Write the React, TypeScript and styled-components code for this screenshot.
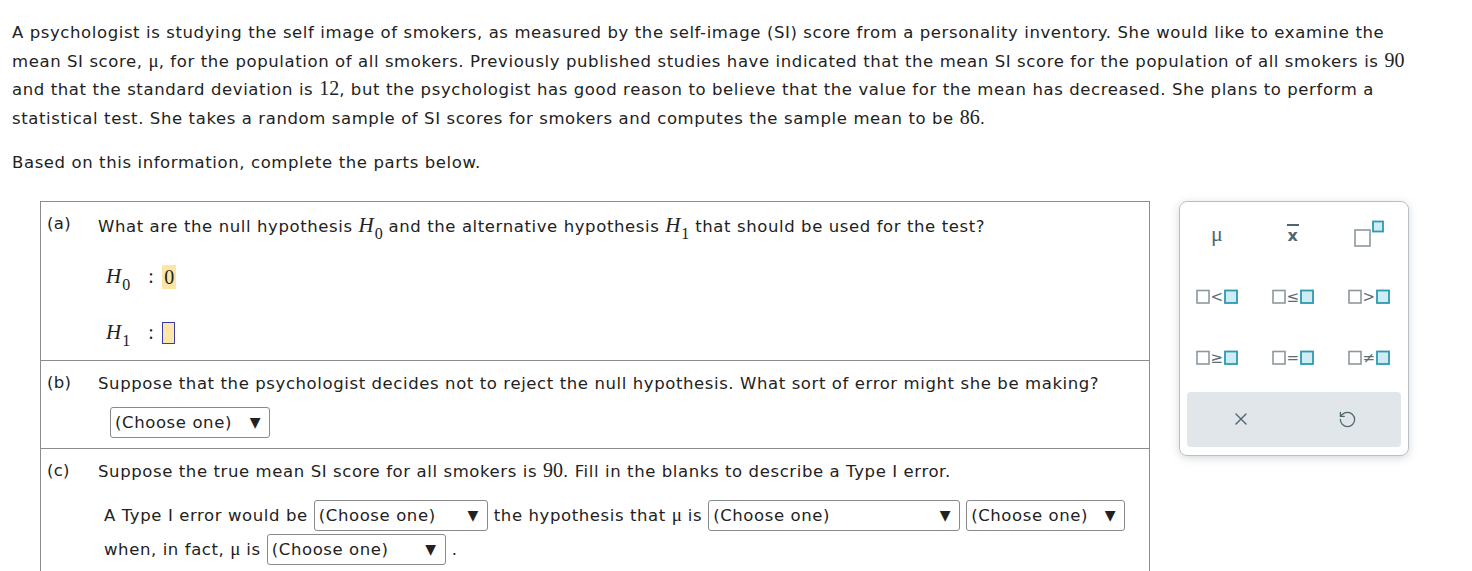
import styled, { createGlobalStyle } from "styled-components";
import { X, RotateCcw } from "lucide-react";

const GlobalStyle = createGlobalStyle`
  body {
    margin: 0;
    background: #fff;
    color: #222;
    font-family: "DejaVu Sans", Verdana, sans-serif;
  }
`;

const Page = styled.div`
  padding: 19px 12px 0 12px;
  width: 1472px;
  box-sizing: border-box;
  height: 571px;
  overflow: hidden;
  font-size: 16.5px;
  letter-spacing: 0.6px;
`;

const Intro = styled.p`
  margin: 0;
  line-height: 28.7px;
  white-space: nowrap;
`;

const Lead = styled.p`
  margin: 17px 0 0 0;
  line-height: 24px;
`;

const Num = styled.span`
  font-family: "Liberation Serif", "Times New Roman", serif;
  font-size: 20px;
  letter-spacing: 0;
  line-height: 0;
`;

const Mu = styled.span`
  font-family: "Liberation Serif", "Times New Roman", serif;
  font-size: 19px;
  letter-spacing: 0;
  line-height: 0;
`;

const Body = styled.div`
  display: flex;
  align-items: flex-start;
  margin-top: 26px;
  margin-left: 28px;
  gap: 29px;
`;

const Table = styled.div`
  width: 1110px;
  box-sizing: border-box;
  border: 1px solid #8c8c8c;
  border-bottom: none;
  height: 400px;
`;

const Part = styled.div<{ $h: number }>`
  display: grid;
  grid-template-columns: 57px 1fr;
  height: ${(p) => p.$h}px;
  box-sizing: border-box;
  border-bottom: 1px solid #8c8c8c;
  padding-top: 11px;
`;

const Label = styled.div`
  padding-left: 6px;
  line-height: 22px;
  letter-spacing: 0.3px;
`;

const Content = styled.div`
  display: flex;
  flex-direction: column;
`;

const Question = styled.div`
  line-height: 24px;
  white-space: nowrap;
`;

const MathI = styled.span`
  font-family: "Liberation Serif", "Times New Roman", serif;
  font-style: italic;
  font-size: 21px;
  letter-spacing: 0;
`;

const Sub = styled.sub`
  font-family: "Liberation Serif", "Times New Roman", serif;
  font-style: normal;
  font-size: 16px;
  vertical-align: -7px;
  line-height: 0;
  letter-spacing: 0;
  margin-left: 1px;
`;

const HypRow = styled.div<{ $top: number }>`
  display: flex;
  align-items: center;
  margin-top: ${(p) => p.$top}px;
  margin-left: 8px;
  height: 28px;
  gap: 8px;
`;

const Colon = styled.span`
  font-family: "Liberation Serif", "Times New Roman", serif;
  font-size: 20px;
  margin-left: 10px;
`;

const Filled = styled.span`
  font-family: "Liberation Serif", "Times New Roman", serif;
  font-size: 20px;
  background: #fbe6a6;
  padding: 0 2px;
  line-height: 24px;
  letter-spacing: 0;
`;

const Blank = styled.span`
  display: inline-block;
  width: 13px;
  height: 22px;
  background: #fde7a8;
  border: 1.5px solid #3c3ca8;
  box-sizing: border-box;
`;

const Select = styled.span<{ $w: number }>`
  display: inline-flex;
  align-items: center;
  justify-content: space-between;
  width: ${(p) => p.$w}px;
  height: 31px;
  box-sizing: border-box;
  border: 1px solid #8a8a8a;
  border-radius: 3px;
  padding: 0 8px 0 4px;
  background: #fff;
`;

const Arrow = styled.span`
  font-size: 14px;
`;

const SelectRow = styled.div<{ $top: number; $left: number }>`
  display: flex;
  align-items: center;
  margin-top: ${(p) => p.$top}px;
  margin-left: ${(p) => p.$left}px;
  gap: 6px;
  white-space: nowrap;
`;

const Panel = styled.div`
  width: 230px;
  height: 255px;
  box-sizing: border-box;
  border: 1px solid #b9c0c4;
  border-radius: 8px;
  box-shadow: 0 2px 8px rgba(80, 100, 110, 0.25);
  padding: 0 7px 7px 7px;
  display: flex;
  flex-direction: column;
`;

const Keys = styled.div`
  display: grid;
  grid-template-columns: repeat(3, 76px);
  grid-template-rows: 65px 61px 61px;
  height: 190px;
  margin-left: -8px;
`;

const Key = styled.div`
  display: flex;
  align-items: center;
  justify-content: center;
  color: #4f6670;
`;

const MuKey = styled.span`
  font-family: "Liberation Serif", serif;
  font-size: 22px;
  color: #4f6670;
  letter-spacing: 0;
`;

const Actions = styled.div`
  display: grid;
  grid-template-columns: 1fr 1fr;
  height: 55px;
  background: #e0e6e9;
  border-radius: 4px;
`;

const Action = styled.div`
  display: flex;
  align-items: center;
  justify-content: center;
  color: #4f6670;
`;

const Choose = ({ w }: { w: number }) => (
  <Select $w={w}>
    <span>(Choose one)</span>
    <Arrow>▼</Arrow>
  </Select>
);

const gray = "#8d989d";
const teal = "#2c9bb0";
const fill = "#cdecf3";

const Relation = ({ op }: { op: string }) => (
  <svg width="42" height="16" viewBox="0 0 42 16">
    <rect x="1" y="1.5" width="12" height="12.5" fill="#fff" stroke={gray} strokeWidth="1.6" />
    <text x="21" y="13" textAnchor="middle" fontSize="15" fill="#5b6e76" fontFamily="DejaVu Sans, sans-serif">
      {op}
    </text>
    <rect x="29" y="1.5" width="12" height="12.5" fill={fill} stroke={teal} strokeWidth="1.8" />
  </svg>
);

const keys = ["<", "≤", ">", "≥", "=", "≠"];

export default function App() {
  return (
    <>
      <GlobalStyle />
      <Page>
        <Intro>
          A psychologist is studying the self image of smokers, as measured by the self-image (SI) score from a
          personality inventory. She would like to examine the
          <br />
          mean SI score, <Mu>μ</Mu>, for the population of all smokers. Previously published studies have indicated that
          the mean SI score for the population of all smokers is <Num>90</Num>
          <br />
          and that the standard deviation is <Num>12</Num>, but the psychologist has good reason to believe that the
          value for the mean has decreased. She plans to perform a
          <br />
          statistical test. She takes a random sample of SI scores for smokers and computes the sample mean to be{" "}
          <Num>86</Num>.
        </Intro>
        <Lead>Based on this information, complete the parts below.</Lead>
        <Body>
          <Table>
            <Part $h={159}>
              <Label>(a)</Label>
              <Content>
                <Question>
                  What are the null hypothesis <MathI>H</MathI>
                  <Sub>0</Sub> and the alternative hypothesis <MathI>H</MathI>
                  <Sub>1</Sub> that should be used for the test?
                </Question>
                <HypRow $top={24}>
                  <span>
                    <MathI>H</MathI>
                    <Sub>0</Sub>
                  </span>
                  <Colon>:</Colon>
                  <Filled>0</Filled>
                </HypRow>
                <HypRow $top={28}>
                  <span>
                    <MathI>H</MathI>
                    <Sub>1</Sub>
                  </span>
                  <Colon>:</Colon>
                  <Blank />
                </HypRow>
              </Content>
            </Part>
            <Part $h={88}>
              <Label>(b)</Label>
              <Content>
                <Question>
                  Suppose that the psychologist decides not to reject the null hypothesis. What sort of error might she be
                  making?
                </Question>
                <SelectRow $top={11} $left={12}>
                  <Choose w={160} />
                </SelectRow>
              </Content>
            </Part>
            <Part $h={200}>
              <Label>(c)</Label>
              <Content>
                <Question>
                  Suppose the true mean SI score for all smokers is <Num>90</Num>. Fill in the blanks to describe a Type I
                  error.
                </Question>
                <SelectRow $top={16} $left={6}>
                  <span>A Type I error would be</span>
                  <Choose w={174} />
                  <span>
                    the hypothesis that <Mu>μ</Mu> is
                  </span>
                  <Choose w={252} />
                  <Choose w={159} />
                </SelectRow>
                <SelectRow $top={3} $left={6}>
                  <span>
                    when, in fact, <Mu>μ</Mu> is
                  </span>
                  <Choose w={179} />
                  <span>.</span>
                </SelectRow>
              </Content>
            </Part>
          </Table>
          <Panel>
            <Keys>
              <Key>
                <MuKey>μ</MuKey>
              </Key>
              <Key>
                <svg width="18" height="24" viewBox="0 0 18 24">
                  <line x1="3" y1="3" x2="15" y2="3" stroke="#4f6670" strokeWidth="2" />
                  <text x="9" y="19" textAnchor="middle" fontSize="16" fontWeight="bold" fill="#4f6670" fontFamily="DejaVu Sans, sans-serif">
                    x
                  </text>
                </svg>
              </Key>
              <Key>
                <svg width="32" height="28" viewBox="0 0 32 28">
                  <rect x="2" y="10" width="15" height="16" fill="#fff" stroke={gray} strokeWidth="1.6" />
                  <rect x="20" y="1.5" width="10" height="10" fill={fill} stroke={teal} strokeWidth="1.8" />
                </svg>
              </Key>
              {keys.map((k) => (
                <Key key={k}>
                  <Relation op={k} />
                </Key>
              ))}
            </Keys>
            <Actions>
              <Action>
                <X size={20} strokeWidth={1.6} />
              </Action>
              <Action>
                <RotateCcw size={19} strokeWidth={1.6} />
              </Action>
            </Actions>
          </Panel>
        </Body>
      </Page>
    </>
  );
}
